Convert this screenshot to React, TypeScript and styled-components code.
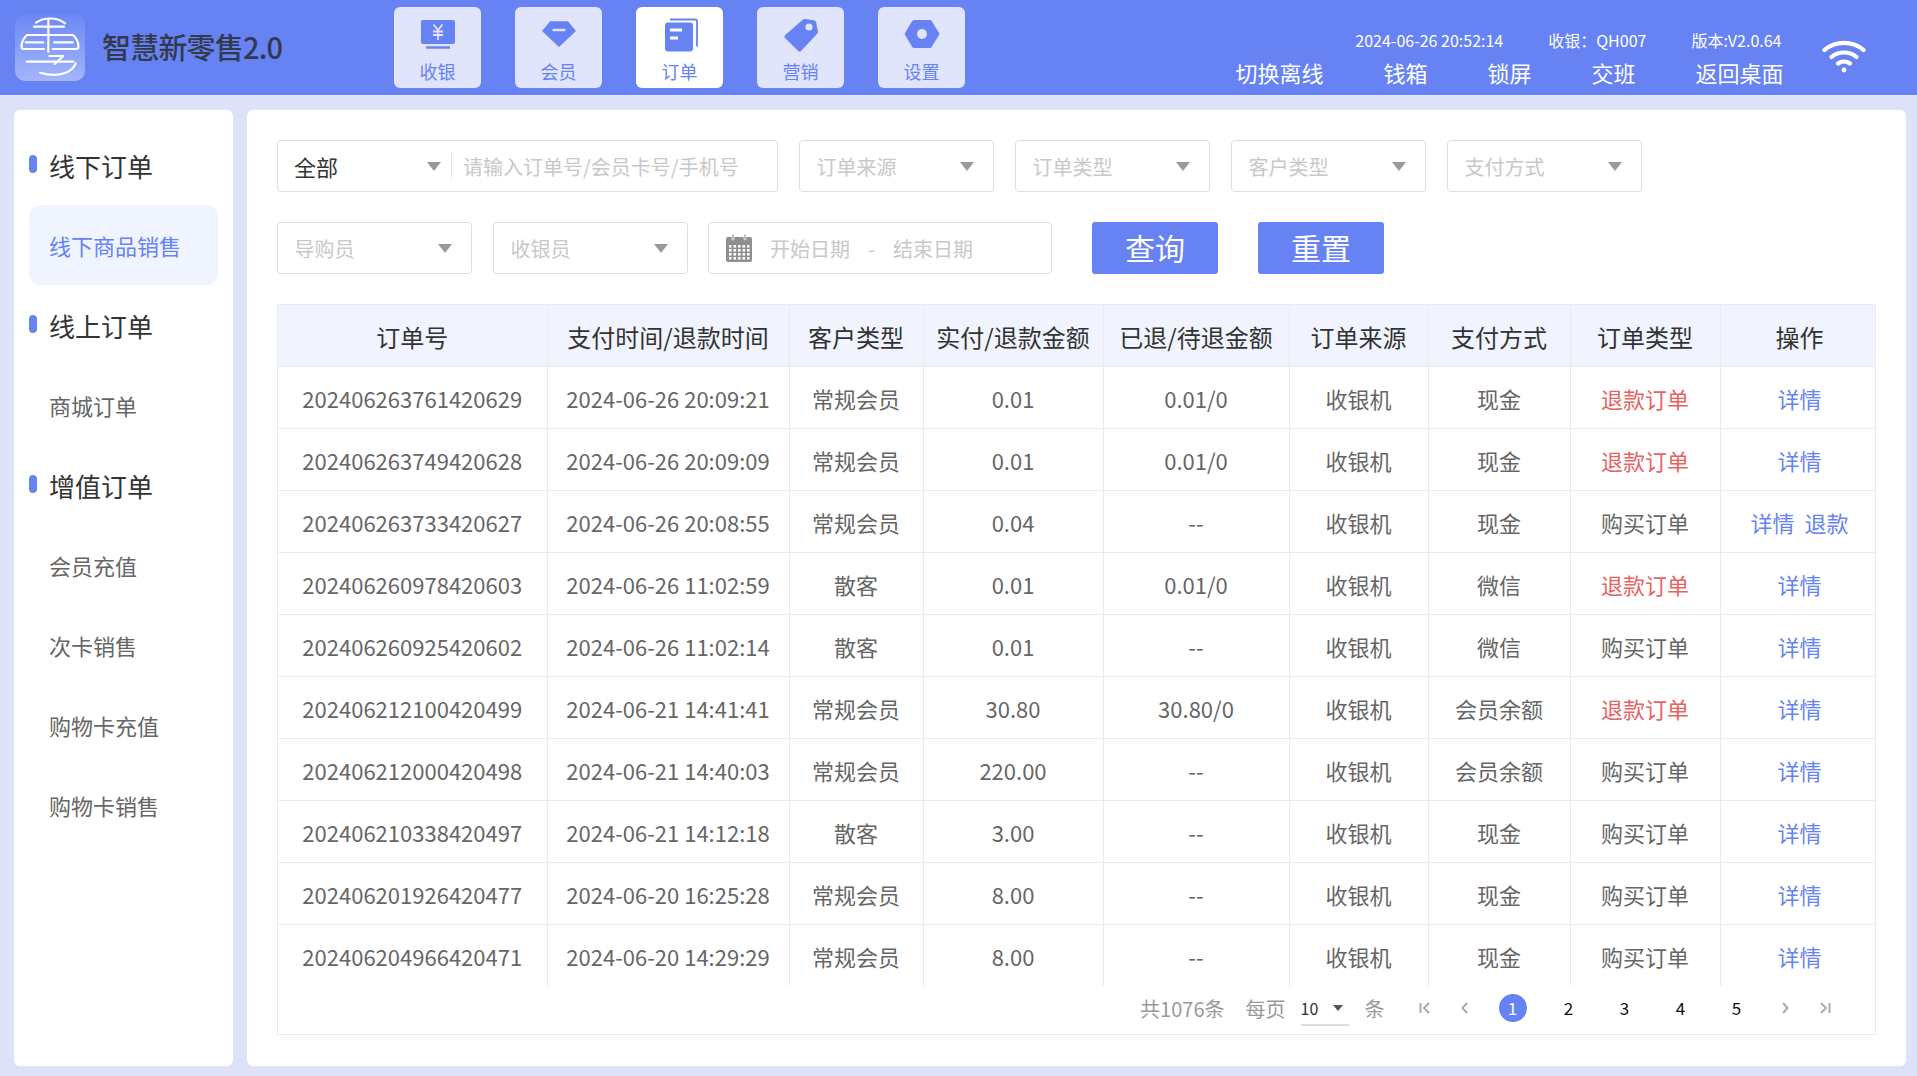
import React from "react";
import styled, { createGlobalStyle } from "styled-components";

const BLUE = "#6783f3";

const GlobalStyle = createGlobalStyle`
  html, body {
    margin: 0;
    padding: 0;
    height: 100%;
    background: #dde2f8;
    font-family: "Noto Sans CJK SC", "Noto Sans", sans-serif;
  }
  * { box-sizing: border-box; }
`;

const Page = styled.div`
  width: 1917px;
  height: 1076px;
  overflow: hidden;
  display: flex;
  flex-direction: column;
  background: #dde2f8;
`;

const TopBar = styled.header`
  height: 96px;
  flex: none;
  display: flex;
  align-items: flex-start;
  background: ${BLUE};
  border-bottom: 1px solid #e3e7fb;
  padding: 0 51px 0 15px;
`;

const Brand = styled.div`
  width: 379px;
  height: 95px;
  flex: none;
  display: flex;
  align-items: center;
  gap: 17px;
`;

const LogoBox = styled.div`
  width: 70px;
  height: 67px;
  border-radius: 10px;
  background: linear-gradient(180deg, #6b87f4 0%, #a3b6fb 100%);
  display: flex;
  svg { display: block; }
`;

const BrandName = styled.div`
  font-size: 29px;
  font-weight: 500;
  color: #333a4d;
  white-space: nowrap;
  letter-spacing: -0.8px;
  margin-top: -4px;
`;

const Nav = styled.nav`
  display: flex;
  gap: 34px;
  padding-top: 7px;
`;

const NavTile = styled.div<{ $active?: boolean }>`
  width: 87px;
  height: 81px;
  border-radius: 6px;
  background: ${({ $active }) => ($active ? "#ffffff" : "#e0e5fb")};
  color: ${BLUE};
  font-size: 18px;
  line-height: 24px;
  display: flex;
  flex-direction: column;
  align-items: center;
  padding-top: 7px;
  svg {
    display: block;
    height: 40px;
    width: 36px;
    margin-bottom: 5px;
  }
`;

const Right = styled.div`
  margin-left: auto;
  display: flex;
  align-items: flex-start;
  gap: 38.5px;
`;

const Info = styled.div`
  display: flex;
  flex-direction: column;
  align-items: flex-end;
  color: #fff;
  padding-top: 27px;
`;

const InfoTop = styled.div`
  display: flex;
  gap: 45px;
  font-size: 16px;
  line-height: 26px;
  white-space: nowrap;
  padding-right: 2px;
`;

const InfoActions = styled.div`
  display: flex;
  gap: 60px;
  font-size: 22px;
  line-height: 32px;
  margin-top: 3px;
  white-space: nowrap;
`;

const Wifi = styled.div`
  padding-top: 39px;
  svg { display: block; }
`;

const Body = styled.div`
  flex: 1;
  min-height: 0;
  display: flex;
  gap: 14px;
  padding: 14px 11px 10px 14px;
`;

const Sidebar = styled.aside`
  width: 219px;
  flex: none;
  background: #fff;
  border-radius: 6px;
  padding: 15px 15px 0;
`;

const Group = styled.div`
  height: 80px;
  display: flex;
  align-items: center;
  gap: 12px;
  font-size: 26px;
  color: #333;
  &::before {
    content: "";
    width: 8px;
    height: 18px;
    border-radius: 4px;
    background: ${BLUE};
    flex: none;
    margin-top: -2px;
  }
`;

const Item = styled.div<{ $active?: boolean }>`
  height: 80px;
  display: flex;
  align-items: center;
  padding-left: 20px;
  font-size: 22px;
  border-radius: 12px;
  color: ${({ $active }) => ($active ? BLUE : "#666")};
  background: ${({ $active }) => ($active ? "#f0f4fe" : "transparent")};
`;

const Main = styled.main`
  flex: 1;
  min-width: 0;
  background: #fff;
  border-radius: 6px;
  padding: 30px 30px 0 30px;
`;

const FilterRow = styled.div`
  display: flex;
  gap: 21.5px;
  height: 52px;
  margin-bottom: 30px;
`;

const Field = styled.div`
  height: 52px;
  border: 1px solid #dedede;
  border-radius: 4px;
  display: flex;
  align-items: center;
  background: #fff;
  font-size: 20px;
  color: #c8c8c8;
  white-space: nowrap;
`;

const SelectField = styled(Field)`
  width: 194.5px;
  justify-content: space-between;
  padding: 0 19px 0 16.5px;
`;

const Caret = styled.span`
  width: 0;
  height: 0;
  border-left: 7.5px solid transparent;
  border-right: 7.5px solid transparent;
  border-top: 9px solid #999;
  flex: none;
`;

const SearchField = styled(Field)`
  width: 500.5px;
  padding-left: 16px;
`;

const ScopeValue = styled.div`
  width: 158px;
  height: 26px;
  padding-right: 10px;
  margin-right: 11px;
  display: flex;
  align-items: center;
  justify-content: space-between;
  border-right: 1px solid #e4e4e4;
  font-size: 22px;
  color: #333;
`;

const DateField = styled(Field)`
  width: 344px;
  margin-left: -1px;
  padding-left: 17px;
  svg { flex: none; margin-right: 18px; }
`;

const DateDash = styled.span`
  margin: 0 18px;
`;

const Btn = styled.button`
  width: 126px;
  height: 52px;
  border: none;
  border-radius: 3px;
  background: ${BLUE};
  color: #fff;
  font-family: inherit;
  font-size: 30px;
  padding: 0 0 3px;
  margin-left: 18.5px;
`;

const TableBox = styled.div`
  width: 1598.5px;
  height: 731px;
  margin-top: 2px;
  border: 1px solid #ebebeb;
  border-top: none;
`;

const TableClip = styled.div`
  height: 682px;
  overflow: hidden;
`;

const OrderTable = styled.table`
  width: 100%;
  table-layout: fixed;
  border-collapse: collapse;
  th, td {
    height: 62px;
    padding: 0;
    text-align: center;
    border: 1px solid #ebebeb;
    white-space: nowrap;
  }
  tr > :first-child { border-left: none; }
  tr > :last-child { border-right: none; padding-left: 3px; }
  th {
    background: #f1f4fe;
    font-size: 24px;
    font-weight: 400;
    color: #333;
    padding-top: 2px;
  }
  td {
    font-size: 22px;
    color: #666;
  }
`;

const DangerText = styled.span`
  color: #e56464;
`;

const LinkText = styled.span`
  color: ${BLUE};
  & + & { margin-left: 10px; }
`;

const Pager = styled.div`
  height: 44px;
  display: flex;
  align-items: center;
  justify-content: flex-end;
  padding-right: 30px;
  color: #999;
  font-size: 20px;
`;

const PagerText = styled.span<{ $ml?: number }>`
  margin-left: ${({ $ml }) => $ml ?? 0}px;
  white-space: nowrap;
`;

const SizeSelect = styled.div`
  width: 48px;
  height: 33px;
  margin-left: 15px;
  margin-right: 16px;
  margin-top: 2px;
  border-bottom: 2px solid #ddd;
  display: flex;
  align-items: center;
  justify-content: space-between;
  padding-right: 6px;
  font-size: 16px;
  color: #333;
`;

const SmallCaret = styled.span`
  width: 0;
  height: 0;
  border-left: 5px solid transparent;
  border-right: 5px solid transparent;
  border-top: 6px solid #555;
`;

const PageArrow = styled.span<{ $first?: boolean }>`
  width: 40px;
  margin-left: ${({ $first }) => ($first ? 20 : 0)}px;
  display: flex;
  justify-content: center;
  svg { display: block; }
`;

const PageNum = styled.span<{ $active?: boolean }>`
  width: 28px;
  height: 28px;
  margin: 0 14px;
  padding-bottom: 2px;
  border-radius: 50%;
  display: flex;
  align-items: center;
  justify-content: center;
  font-size: 17px;
  background: ${({ $active }) => ($active ? BLUE : "transparent")};
  color: ${({ $active }) => ($active ? "#fff" : "#111")};
`;

function CashIcon() {
  return (
    <svg viewBox="0 0 36 40" fill="none">
      <path d="M3 6h30a2 2 0 0 1 2 2v20a2 2 0 0 1-2 2H3a2 2 0 0 1-2-2V8a2 2 0 0 1 2-2z" fill={BLUE} />
      <path d="M6 33.500h24" stroke={BLUE} strokeWidth="2.400" />
      <path d="M13.500 10.500 18 16l4.500-5.500M13 17.500h10M13 21h10M18 16v10" stroke="#e0e5fb" strokeWidth="1.800" />
    </svg>
  );
}

function DiamondIcon() {
  return (
    <svg viewBox="0 0 36 40" fill="none">
      <path d="M9.500 8h17L34 17 18 32 2 17z" fill={BLUE} stroke={BLUE} strokeWidth="1.500" strokeLinejoin="round" />
      <path d="M12.500 16h11" stroke="#e0e5fb" strokeWidth="2.400" strokeLinecap="round" />
    </svg>
  );
}

function OrderIcon() {
  return (
    <svg viewBox="0 0 36 40" fill="none">
      <path d="M8 5.500h25a2 2 0 0 1 2 2v25" stroke={BLUE} strokeWidth="1.800" />
      <rect x="3" y="8.500" width="28" height="29" rx="3" fill={BLUE} />
      <path d="M8 16h12M8 24h8" stroke="#fff" strokeWidth="3.200" />
    </svg>
  );
}

function TagIcon() {
  return (
    <svg viewBox="0 0 36 40" fill="none">
      <path d="M22 5l9.500 1.500a2 2 0 0 1 1.600 1.400L35 18a2 2 0 0 1-.6 1.600L18 37a2 2 0 0 1-2.700 0L2 24a2 2 0 0 1 0-2.700L20 5.500a2 2 0 0 1 2-.5z" fill={BLUE} />
      <circle cx="26" cy="13" r="3.600" fill="#e0e5fb" />
    </svg>
  );
}

function NutIcon() {
  return (
    <svg viewBox="0 0 36 40" fill="none">
      <path d="M10 6h16a2 2 0 0 1 1.700 1l7.300 12a2 2 0 0 1 0 2l-7.300 12a2 2 0 0 1-1.700 1H10a2 2 0 0 1-1.700-1L1 21a2 2 0 0 1 0-2L8.300 7A2 2 0 0 1 10 6z" fill={BLUE} />
      <circle cx="18" cy="20" r="5" fill="#e0e5fb" />
    </svg>
  );
}

function LogoMark() {
  return (
    <svg width="70" height="67" viewBox="15 12 210 201" fill="none" stroke="#fff" strokeWidth="6.500" strokeLinecap="round" strokeLinejoin="round">
      <path d="M78 38c24-17 64-17 87 2" />
      <path d="M72 50h90M115 30v96" />
      <path d="M35 104c2-12 8-22 16-29h138c8 7 14 17 16 29" />
      <path d="M35 104v8c0 3 2 5 5 5h62" />
      <path d="M205 104v8c0 3-2 5-5 5h-72" />
      <path d="M47 97h53M132 97h56" />
      <path d="M50 155h140" />
      <path d="M118 138h42l-26 24" />
      <path d="M197 160c-10 28-52 44-107 28" />
    </svg>
  );
}

function WifiIcon() {
  return (
    <svg width="44" height="34" viewBox="0 0 44 34" fill="none" stroke="#fff" strokeWidth="4.200" strokeLinecap="round">
      <path d="M2.500 11C13 1.500 31 1.500 41.500 11" />
      <path d="M9.500 18c7-6 18-6 25 0" />
      <path d="M16 24.500c3.500-2.600 8.500-2.600 12 0" />
      <circle cx="22" cy="31" r="2.400" fill="#fff" stroke="none" />
    </svg>
  );
}

function CalendarIcon() {
  return (
    <svg width="26" height="28" viewBox="0 0 26 28">
      <path d="M2 3h22a2 2 0 0 1 2 2v21a2 2 0 0 1-2 2H2a2 2 0 0 1-2-2V5a2 2 0 0 1 2-2z" fill="#8f8f8f" />
      <rect x="6" y="0" width="2" height="6" rx="1" fill="#8f8f8f" stroke="#fff" strokeWidth="0.800" />
      <rect x="18" y="0" width="2" height="6" rx="1" fill="#8f8f8f" stroke="#fff" strokeWidth="0.800" />
      <g fill="#fff">
        {[11, 15, 19, 23].flatMap((y) =>
          [3, 7.5, 12, 16.5, 21].map((x) => <rect key={`${x}-${y}`} x={x} y={y} width="2.600" height="2.600" />)
        )}
      </g>
    </svg>
  );
}

const chevronPaths = {
  first: "M1.500 1v10M10 1 5 6l5 5",
  prev: "M8 1 3.500 6 8 11",
  next: "M4 1l4.500 5L4 11",
  last: "M2 1l5 5-5 5M10.500 1v10",
};

function Chevron({ kind }: { kind: keyof typeof chevronPaths }) {
  return (
    <svg width="12" height="12" viewBox="0 0 12 12" fill="none" stroke="#aaa" strokeWidth="1.900">
      <path d={chevronPaths[kind]} />
    </svg>
  );
}

const navItems = [
  { label: "收银", icon: <CashIcon /> },
  { label: "会员", icon: <DiamondIcon /> },
  { label: "订单", icon: <OrderIcon />, active: true },
  { label: "营销", icon: <TagIcon /> },
  { label: "设置", icon: <NutIcon /> },
];

const columns = [
  { title: "订单号", width: 269 },
  { title: "支付时间/退款时间", width: 242 },
  { title: "客户类型", width: 134 },
  { title: "实付/退款金额", width: 180 },
  { title: "已退/待退金额", width: 186 },
  { title: "订单来源", width: 139 },
  { title: "支付方式", width: 142 },
  { title: "订单类型", width: 150 },
  { title: "操作", width: 155.5 },
];

const R = "退款订单";
const B = "购买订单";
const M = "常规会员";
const S = "散客";

const rows = [
  ["202406263761420629", "2024-06-26 20:09:21", M, "0.01", "0.01/0", "现金", R],
  ["202406263749420628", "2024-06-26 20:09:09", M, "0.01", "0.01/0", "现金", R],
  ["202406263733420627", "2024-06-26 20:08:55", M, "0.04", "--", "现金", B],
  ["202406260978420603", "2024-06-26 11:02:59", S, "0.01", "0.01/0", "微信", R],
  ["202406260925420602", "2024-06-26 11:02:14", S, "0.01", "--", "微信", B],
  ["202406212100420499", "2024-06-21 14:41:41", M, "30.80", "30.80/0", "会员余额", R],
  ["202406212000420498", "2024-06-21 14:40:03", M, "220.00", "--", "会员余额", B],
  ["202406210338420497", "2024-06-21 14:12:18", S, "3.00", "--", "现金", B],
  ["202406201926420477", "2024-06-20 16:25:28", M, "8.00", "--", "现金", B],
  ["202406204966420471", "2024-06-20 14:29:29", M, "8.00", "--", "现金", B],
];

export default function App() {
  return (
    <Page>
      <GlobalStyle />
      <TopBar>
        <Brand>
          <LogoBox>
            <LogoMark />
          </LogoBox>
          <BrandName>智慧新零售2.0</BrandName>
        </Brand>
        <Nav>
          {navItems.map((n) => (
            <NavTile key={n.label} $active={n.active}>
              {n.icon}
              {n.label}
            </NavTile>
          ))}
        </Nav>
        <Right>
          <Info>
            <InfoTop>
              <span>2024-06-26 20:52:14</span>
              <span>收银：QH007</span>
              <span>版本:V2.0.64</span>
            </InfoTop>
            <InfoActions>
              <span>切换离线</span>
              <span>钱箱</span>
              <span>锁屏</span>
              <span>交班</span>
              <span>返回桌面</span>
            </InfoActions>
          </Info>
          <Wifi>
            <WifiIcon />
          </Wifi>
        </Right>
      </TopBar>
      <Body>
        <Sidebar>
          <Group>线下订单</Group>
          <Item $active>线下商品销售</Item>
          <Group>线上订单</Group>
          <Item>商城订单</Item>
          <Group>增值订单</Group>
          <Item>会员充值</Item>
          <Item>次卡销售</Item>
          <Item>购物卡充值</Item>
          <Item>购物卡销售</Item>
        </Sidebar>
        <Main>
          <FilterRow>
            <SearchField>
              <ScopeValue>
                全部
                <Caret />
              </ScopeValue>
              请输入订单号/会员卡号/手机号
            </SearchField>
            {["订单来源", "订单类型", "客户类型", "支付方式"].map((t) => (
              <SelectField key={t}>
                {t}
                <Caret />
              </SelectField>
            ))}
          </FilterRow>
          <FilterRow>
            <SelectField>
              导购员
              <Caret />
            </SelectField>
            <SelectField>
              收银员
              <Caret />
            </SelectField>
            <DateField>
              <CalendarIcon />
              开始日期
              <DateDash>-</DateDash>
              结束日期
            </DateField>
            <Btn>查询</Btn>
            <Btn>重置</Btn>
          </FilterRow>
          <TableBox>
            <TableClip>
              <OrderTable>
                <colgroup>
                  {columns.map((c) => (
                    <col key={c.title} style={{ width: c.width }} />
                  ))}
                </colgroup>
                <thead>
                  <tr>
                    {columns.map((c) => (
                      <th key={c.title}>{c.title}</th>
                    ))}
                  </tr>
                </thead>
                <tbody>
                  {rows.map((r) => (
                    <tr key={r[0]}>
                      <td>{r[0]}</td>
                      <td>{r[1]}</td>
                      <td>{r[2]}</td>
                      <td>{r[3]}</td>
                      <td>{r[4]}</td>
                      <td>收银机</td>
                      <td>{r[5]}</td>
                      <td>{r[6] === R ? <DangerText>{r[6]}</DangerText> : r[6]}</td>
                      <td>
                        <LinkText>详情</LinkText>
                        {r[0] === "202406263733420627" && <LinkText>退款</LinkText>}
                      </td>
                    </tr>
                  ))}
                </tbody>
              </OrderTable>
            </TableClip>
            <Pager>
              <PagerText>共1076条</PagerText>
              <PagerText $ml={21}>每页</PagerText>
              <SizeSelect>
                10
                <SmallCaret />
              </SizeSelect>
              <PagerText>条</PagerText>
              <PageArrow $first>
                <Chevron kind="first" />
              </PageArrow>
              <PageArrow>
                <Chevron kind="prev" />
              </PageArrow>
              {[1, 2, 3, 4, 5].map((p) => (
                <PageNum key={p} $active={p === 1}>
                  {p}
                </PageNum>
              ))}
              <PageArrow>
                <Chevron kind="next" />
              </PageArrow>
              <PageArrow>
                <Chevron kind="last" />
              </PageArrow>
            </Pager>
          </TableBox>
        </Main>
      </Body>
    </Page>
  );
}
